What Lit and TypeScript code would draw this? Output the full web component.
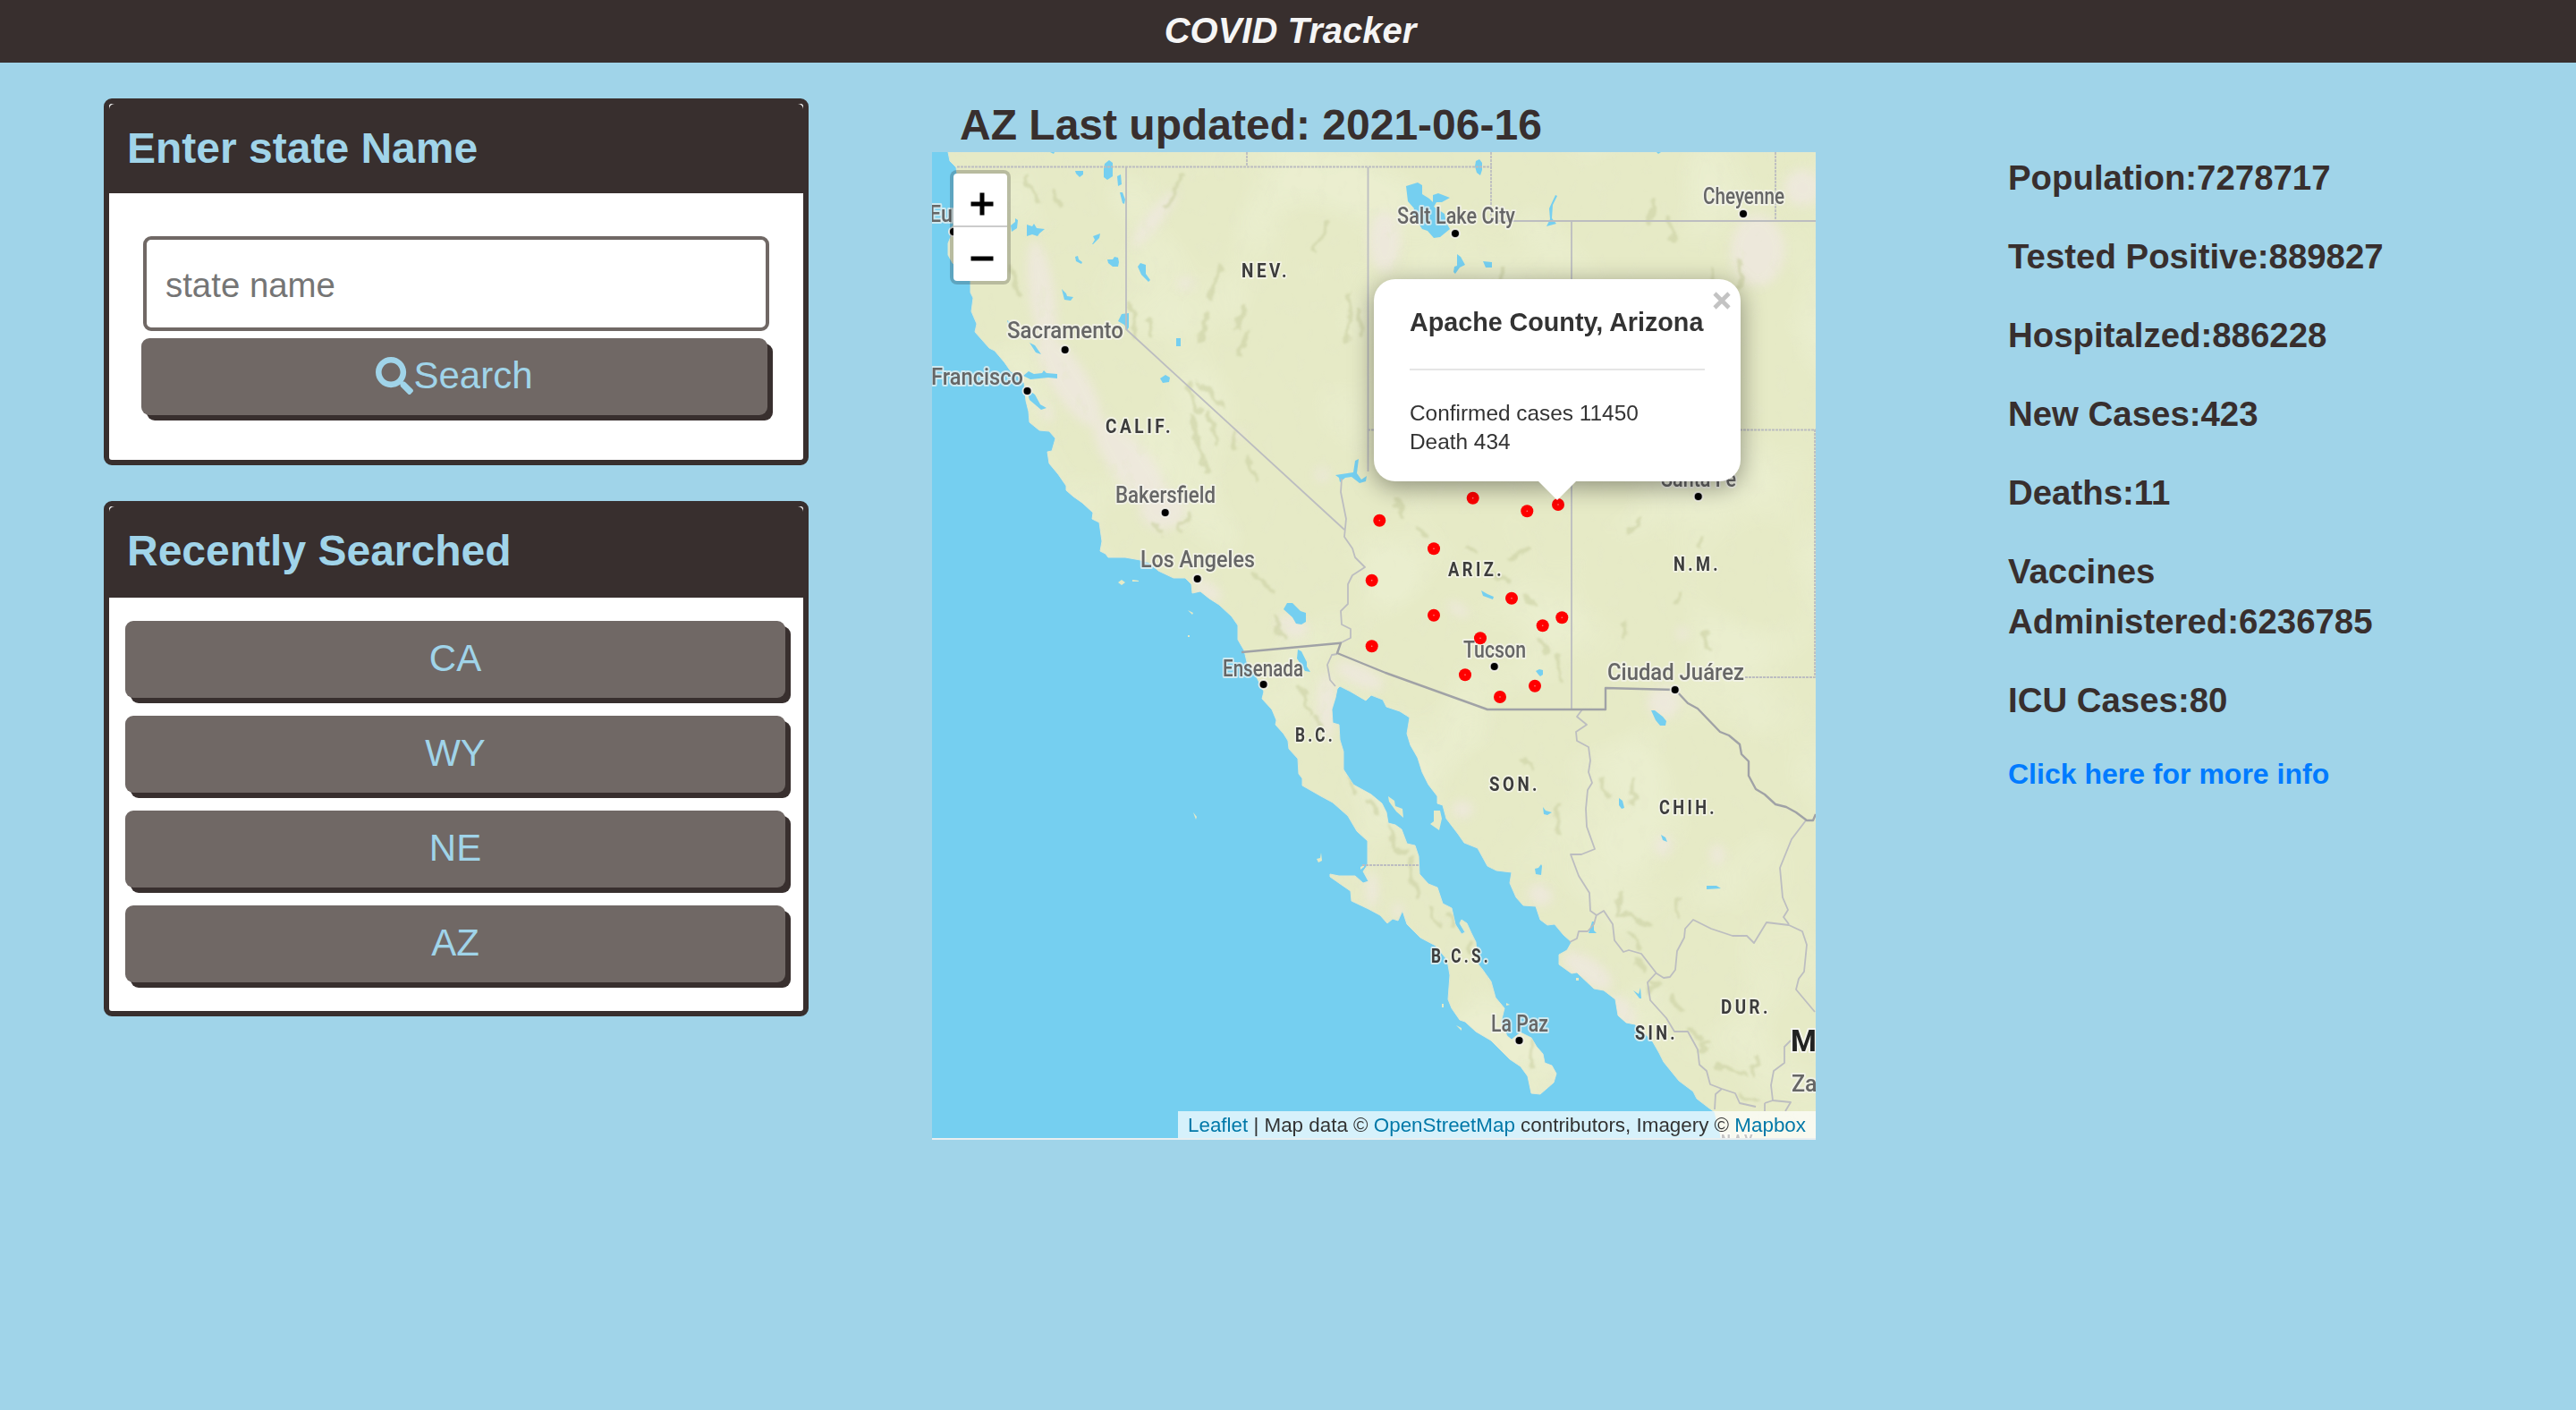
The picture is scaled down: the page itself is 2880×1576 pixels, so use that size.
import { LitElement, html, css, svg } from "lit";
import { customElement, property } from "lit/decorators.js";

const FONT = css`"Liberation Sans", Arial, sans-serif`;

@customElement("info-card")
class InfoCard extends LitElement {
  @property() heading = "";
  static styles = css`
    :host { display: block; box-sizing: border-box; border: 6px solid #382f2e; border-radius: 9px; background: #fff; }
    .head { box-sizing: border-box; height: var(--head-height, 100px); padding: 21px 0 0 20px; background: #382f2e; border-radius: 6px 6px 0 0; }
    h2 { margin: 0; font: bold 48px/58px ${FONT}; color: #a0d4e9; white-space: nowrap; }
  `;
  render() {
    return html`<div class="head"><h2>${this.heading}</h2></div><slot></slot>`;
  }
}

interface Label { t: string; x: number; y: number; w?: number; }

const CITIES: Label[] = [
  { t: "Eur", x: 1039, y: 248, w: 34 },
  { t: "Sacramento", x: 1126, y: 378, w: 130 },
  { t: "Francisco", x: 1041, y: 430, w: 103 },
  { t: "Bakersfield", x: 1247, y: 562, w: 112 },
  { t: "Los Angeles", x: 1275, y: 634, w: 128 },
  { t: "Ensenada", x: 1367, y: 755.5, w: 90 },
  { t: "Salt Lake City", x: 1562, y: 250, w: 132 },
  { t: "Cheyenne", x: 1904, y: 228, w: 91 },
  { t: "Santa Fe", x: 1857, y: 544, w: 84 },
  { t: "Tucson", x: 1636, y: 735, w: 70 },
  { t: "Ciudad Juárez", x: 1797, y: 760, w: 153 },
  { t: "La Paz", x: 1667, y: 1152.5, w: 64 },
  { t: "Zac", x: 2003, y: 1220 },
];

const STATES: Label[] = [
  { t: "NEV.", x: 1388, y: 309.5, w: 54 },
  { t: "CALIF.", x: 1236, y: 484, w: 76 },
  { t: "ARIZ.", x: 1619, y: 643.5, w: 63 },
  { t: "N.M.", x: 1871, y: 638, w: 53 },
  { t: "B.C.", x: 1448, y: 829, w: 45 },
  { t: "SON.", x: 1665, y: 883.5, w: 57 },
  { t: "CHIH.", x: 1855, y: 909.5, w: 65 },
  { t: "B.C.S.", x: 1600, y: 1076, w: 67 },
  { t: "SIN.", x: 1828, y: 1161.5, w: 48 },
  { t: "DUR.", x: 1924, y: 1132.5, w: 56 },
  { t: "NAY.", x: 1924, y: 1284, w: 44 },
];

const DOTS = [
  [1066, 259], [1190.7, 391], [1148.5, 437], [1302.7, 573], [1338.7, 647], [1412.6, 765],
  [1627, 261], [1949, 239], [1898.7, 555], [1670.7, 745], [1872.7, 771], [1698.5, 1163],
];

const CASES = [
  [1646.7, 556.7], [1707.3, 571.3], [1742, 564], [1542.3, 581.7], [1603, 613.3],
  [1533.7, 648.7], [1690, 668.7], [1603, 687.7], [1746.3, 690.3], [1724.7, 699.3],
  [1655, 713.3], [1533.7, 722.3], [1638, 754.3], [1677, 779], [1716, 766.7],
];

const LAND =
  "M1060 170 1062 180 1069 187 1072 210 1068 240 1064 262 1060 272 1060 285 1065 294 1076 303 1085 314 1085 327 1088 333 1086 348 1092 362 1090 371 1106 389 1112 392 1123 405 1130 415 1138 420 1145 428 1147 448 1150 460 1151 472 1162 481 1173 482 1180 490 1176 504 1171 505 1173 518 1183 530 1192 543 1192 548 1200 555 1210 562 1222 573 1221 580 1229 584 1232 605 1230 616 1236 619 1239 623 1258 623 1275 626 1285 629 1295 638 1312 646 1325 646 1332 653 1333 663 1342 661 1352 669 1363 676 1377 689 1384 699 1384 715 1391 727 1394 740 1405 757 1413 773 1411 781 1422 793 1427 805 1426 810 1435 820 1440 828 1441 837 1451 848 1452 865 1456 870 1456 878 1477 890 1490 897 1507 912 1517 929 1529 940 1529 967 1524 974 1530 985 1524 987 1515 979 1497 979 1487 977 1487 980 1497 987 1510 996 1511 1007 1530 1016 1543 1023 1551 1032 1557 1027 1563 1029 1568 1018 1573 1033 1588 1048 1605 1057 1618 1073 1621 1090 1619 1117 1623 1127 1632 1140 1638 1142 1650 1153 1667 1163 1688 1184 1700 1192 1708 1203 1712 1222 1722 1223 1737 1210 1740 1200 1735 1191 1727 1188 1725 1178 1718 1170 1712 1160 1700 1154 1690 1162 1685 1158 1678 1143 1682 1127 1672 1115 1667 1097 1657 1083 1652 1077 1650 1053 1645 1043 1640 1032 1634 1028 1632 1032 1638 1042 1634 1044 1627 1033 1623 1015 1613 1010 1607 992 1597 988 1587 977 1586 957 1582 945 1573 943 1567 927 1560 922 1552 920 1550 908 1545 898 1533 888 1513 877 1502 860 1502 840 1498 827 1497 810 1490 808 1489 793 1493 780 1495 770 1498 767 1510 773 1527 783 1533 777 1546 782 1550 790 1565 795 1576 802 1573 820 1577 833 1585 847 1590 863 1597 877 1607 890 1607 898 1613 900 1617 915 1630 932 1637 942 1652 948 1663 968 1673 973 1690 975 1688 987 1695 1003 1703 1012 1717 1013 1722 1028 1730 1034 1738 1033 1748 1045 1757 1053 1752 1062 1743 1067 1743 1078 1757 1088 1763 1087 1782 1105 1793 1107 1806 1117 1809 1135 1818 1143 1828 1145 1847 1163 1855 1177 1860 1187 1877 1208 1893 1220 1897 1228 1910 1238 1917 1243 1925 1274 2030 1274 2030 170Z";

const ISLANDS =
  "M1250 651 1254 648 1258 651 1254 654ZM1266 648 1273 649 1273 650 1266 650ZM1328 682 1334 685 1333 687ZM1328 710h2v2h-2ZM1334 908 1338 913 1337 916ZM1477 953 1478 962 1474 964 1472 960 1476 959ZM1552 890 1559 895 1560 901 1568 904 1569 914 1561 907 1553 896ZM1603 906 1610 906 1612 915 1609 928 1599 921 1603 918ZM1612 1122h2v4h-2ZM1628 1146 1634 1149 1634 1152ZM1684 1121 1688 1123 1684 1124ZM1762 1093h3v3h-3ZM1521 969l4-2v2l-4 3Z";

const LAKES =
  "M1235 183l5-4 4 3 0 15-6 4-4-3 0-9ZM1202 191l9 0 0 4-4 3-4-4ZM1249 197l4-2 1 11-4 2ZM1252 215l3 0 3 8-1 5-2-1ZM1130 252l5-4 0-4 3 2-1 9-6 4ZM1148 251l6 2 2-3 3 5 9 1-6 5-2 3-6-2-6 2ZM1222 264l8-3-1 5-7 7-1 0 3-5ZM1202 287l3-1 1 4 4 3-1 2-6-3ZM1238 290l6 0 2-3 4 1 1 5-1 5-6 0-5-4ZM1272 298l3-4 6 2 0 10 5 7-2 2-8-8ZM1187 323l5 5 1 3 7 1-3 4-7-1ZM1254 351l8-1 0 16-2 3-3-6-7-4ZM1315 378l5 0 0 9-5 0ZM1297 423l6-4 5 3-1 5-7 1ZM1151 383l6 3 7 10-6-2ZM1144 420l6-5 6 3 9-1 2-3 3 3 12 1 0 5-10-1-20 2ZM1147 434l10 7 6 11 7 4-6 2-13-11ZM1126 358l5 3-4 1ZM1435 681l4-7 6 0 9 9 6 2 0 10-5 3-6-1-4-7ZM1451 726l4 2 6 12 0 5 4 6-6-1-9-14ZM1493 531l20-3 2-13 4-2-2 16 5 7 6-4-1 6-7 2-9-7-7 1-6 5-1-5ZM1572 208l13-4 5 3 0 10 8 5 4 4 0-8 6-2 13 5-9 5-6 0-3 5 12 8 2 10 4 7-11 9-7 1-7-8-6-2-11-17 2-6-7-8ZM1650 180l4-2 3 4 0 8-2 6-4-3-2-7ZM1629 284l4 3 5 9-6 3-5 7-2-2 1-6 3-1ZM1658 292l10 1 0 6-7 0ZM1739 218l2 1-5 10-1 15 5 6-11 3 4-8-1-12ZM1656 660l7 4 7 3-1 3-11-4ZM1717 750l4-2 4 1 0 5-3 2-2-2ZM1846 794l4 0 9 7 4 5-1 5-6 0-5-6ZM1810 892l4 3 2 8-3 1-3-4ZM1857 933l5 3 2 5-5-2ZM1725 902l3 4 7 2-5 3-4-1ZM1716 971l4-1 3-4 1 2-1 10-6-1ZM1908 990l11 0 5 3-16 1ZM1777 1040l3-10 2 0 0 10 3 3-9 0ZM1826 1107l6 4 2-7 1 12-2 0ZM1174 170h5l-1 2ZM1852 170h5l-3 2Z";

const STATE_LINES =
  "M1259 187V368L1503 592M1529.5 187V527M1757 247V793M1667 247H2030M1500 535l-1 15 6 30-2 20 9 13 3 10 11 11-14 9-5 10v22l-8 8 1 15 10 5v10l-12 6";

const DASHED_LINES =
  "M1070 186.500H1668M1394 170V186M1667 170V247M1985 170V247M1529 480.500H2030M2029 480V757H1950M1523 967H1587";

const MEXICO_LINES =
  "M1495 731l-6 1-5 11 3 17 6 7M1769 793l-6 8 11 9-12 8 1 10 13 7 2 15-2 13 4 12-5 8-2 21 1 20 9 25-15 6h-12l9 24 12 19 1 20 7 5 8-5 10 15 2 18 10 13 6-2 14 4 17 22 8 5 7-1 6-8 2-21 8-15 1-10 9-10 20 10 24 8 16 0 8 8 14-23 25 3 15 7 5 15-3 30-6 8-3 12 21 25M1785 1022l-3 11-7 8h-10l-2 8-8 4M2019 917l-16 21-13 32 3 33 6 14-5 8 6 8M1852 1087l-10 11 3 20 18 20 9 15 15 0 11 20 2 17 8 7 4 15 13 5 15 5 5 11 18 4M1925 1217l-7 6-1 17M2002 1163l-7 7v18l-12 9-3 16 2 17-9 3M1982 1230l20 2-6 10M1973 1233v9";

const NATION_LINES =
  "M1388 729 1499 718.700 1495 730 1549 752 1663 793H1795V769L1873 771 1887 786 1898 792 1923 818 1933 822 1945 832 1947 843 1955 851 1955 867 1963 882 1973 888 1985 899 1997 902 2008 908 2020 917 2027 917 2030 910";

/* soft arid zones: cx, cy, rx, ry, rotation */
const ARID = [
  [1165, 330, 14, 62, -8], [1195, 425, 20, 60, -32], [1265, 520, 22, 62, -38], [1300, 570, 26, 22, 0],
  [1548, 270, 18, 34, 0], [1290, 245, 8, 40, 38], [1326, 317, 10, 7, 0], [1478, 530, 8, 8, 0],
  [1350, 660, 18, 9, 35], [1445, 700, 18, 12, 20], [1520, 755, 30, 11, 25], [1483, 790, 10, 38, 0],
  [1534, 995, 7, 20, 0], [1563, 1018, 6, 9, 0], [1630, 681, 14, 6, 30], [1881, 708, 6, 8, 0],
  [1722, 1000, 14, 12, 30], [1775, 1085, 32, 14, 35], [1815, 1130, 10, 20, -35], [1860, 785, 18, 18, 0],
  [1965, 280, 30, 40, 0], [2015, 210, 20, 20, 0], [1635, 905, 12, 10, 0], [1385, 485, 6, 5, 0],
  [1170, 460, 6, 12, -30], [1860, 945, 10, 12, 0], [1920, 955, 8, 12, 0],
];

/* ridges drawn as soft darker strokes */
const RIDGES =
  "M1160 225l-12-25M1178 215l8 14M1130 300l10 30M1322 200l-18 30M1350 350l-8 28M1365 300l-12 34M1483 250l-14 30M1390 345l-6 22M1395 370l-8 26M1508 330v50M1520 345v30M1265 340l4 38M1284 355l3 22M1330 430l12 30M1334 465l6 40 8 22M1352 465l10 30M1395 510l8 26M1340 430l28 24M1378 480v20M1290 585l10 12M1320 590l10-16M1400 640l24 22M1425 690l10 22M1455 770l10 26M1470 800l8 18M1507 868l8 18M1530 895l10 14M1555 925l4 22 12 6M1580 960v30l6 8M1600 1015l10 18M1620 1022l4 14M1643 1055v10M1712 1165v30M1868 245l4 24M1915 300v30M1850 220l-8 26M1560 560l10 18M1585 590l8 10M1640 610l12 10M1720 715l8 14M1740 735l6 24M1835 580l-6 12-10 3M1905 600l-6 10M1880 660l-5 14M1815 695v18M1905 705l8 20M1790 870l8 20M1825 870v30M1742 900v30M1810 1020v-18l4-8M1822 1045l10 10M1830 1070l8 14M1815 1020l30 14M1845 1095l10 5-12 8M1870 1115l10 14M1890 1150l14 16M1900 1175l12-6M1920 1190l30 10M1960 1200l5-20M1875 1005v18M1945 1225l20 8M1710 610l-20 14M1615 330l20-8M1680 300l-8 20M1555 450v30M1945 290l2 30M1665 640l20 10M1705 665l10 10M1700 850l12 6";

@customElement("region-map")
class RegionMap extends LitElement {
  static styles = css`
    :host { display: block; position: relative; overflow: hidden; height: 1104px; background: #e9eef0; font-family: ${FONT}; }
    .canvas { display: block; width: 988px; height: 1102px; }
    .city { font: 500 25px Roboto, sans-serif; fill: #666; stroke: rgba(244, 244, 240, 0.7); stroke-width: 4px; paint-order: stroke; stroke-linejoin: round; }
    .state { font: bold 21.500px Roboto, sans-serif; letter-spacing: 4px; fill: #3c3c3c; stroke: rgba(244, 244, 236, 0.75); stroke-width: 4px; paint-order: stroke; stroke-linejoin: round; }
    .country { font: bold 33px Roboto, sans-serif; fill: #222; stroke: #f4f4ec; stroke-width: 4px; paint-order: stroke; }
    .zoom { position: absolute; left: 20px; top: 20px; width: 60px; border: 4px solid rgba(0, 0, 0, 0.2); border-radius: 8px; background: #fff; background-clip: padding-box; }
    .zoom div { display: flex; align-items: center; justify-content: center; height: 60px; padding: 9px 0 0 4px; box-sizing: border-box; }
    .zoom div:first-child { border-bottom: 2px solid #ccc; }
    .zoom svg { display: block; }
    .popup { position: absolute; left: 494px; top: 142px; width: 410px; height: 226px; box-sizing: border-box; padding: 32px 40px 0; border-radius: 24px; background: #fff; color: #333; box-shadow: 0 6px 28px rgba(0, 0, 0, 0.4); }
    .popup h3 { margin: 0; font: bold 28.700px/32px ${FONT}; white-space: nowrap; }
    .popup hr { margin: 36px 0 32px; border: 0; border-top: 2px solid #e5e5e5; }
    .popup p { margin: 0; font-size: 24.400px; line-height: 32px; white-space: nowrap; }
    .tip { position: absolute; left: 184px; top: 226px; width: 42px; height: 21px; background: #fff; clip-path: polygon(0 0, 100% 0, 50% 100%); }
    .close { position: absolute; left: 379px; top: 14px; display: block; }
    .credit { position: absolute; right: 0; bottom: 2px; height: 30px; padding: 0 11px; background: rgba(255, 255, 255, 0.7); color: #333; font-size: 22.400px; line-height: 32px; white-space: nowrap; }
    .credit a { color: #0078a8; text-decoration: none; }
  `;

  label(l: Label, cls: string) {
    return l.w
      ? svg`<text class=${cls} x=${l.x} y=${l.y} textLength=${l.w} lengthAdjust="spacingAndGlyphs">${l.t}</text>`
      : svg`<text class=${cls} x=${l.x} y=${l.y}>${l.t}</text>`;
  }

  render() {
    return html`
      <svg class="canvas" viewBox="1042 170 988 1102">
        <defs>
          <clipPath id="land"><path d=${LAND}></path></clipPath>
          <filter id="soft" x="-50%" y="-50%" width="200%" height="200%"><feGaussianBlur stdDeviation="6"></feGaussianBlur></filter>
          <filter id="ridge" x="-5%" y="-5%" width="110%" height="110%">
            <feTurbulence type="fractalNoise" baseFrequency="0.07" numOctaves="2" seed="3" result="n"></feTurbulence>
            <feDisplacementMap in="SourceGraphic" in2="n" scale="16" xChannelSelector="R" yChannelSelector="G"></feDisplacementMap>
            <feGaussianBlur stdDeviation="1.3"></feGaussianBlur>
          </filter>
          <filter id="relief" x="0" y="0" width="100%" height="100%">
            <feTurbulence type="fractalNoise" baseFrequency="0.07 0.045" numOctaves="3" seed="11"></feTurbulence>
            <feColorMatrix values="0 0 0 0 0.79  0 0 0 0 0.81  0 0 0 0 0.6  6 0 0 0 -3.6"></feColorMatrix>
          </filter>
          <filter id="meadow" x="0" y="0" width="100%" height="100%">
            <feTurbulence type="fractalNoise" baseFrequency="0.008" numOctaves="2" seed="4"></feTurbulence>
            <feColorMatrix values="0 0 0 0 0.885  0 0 0 0 0.92  0 0 0 0 0.735  0 4 0 0 -1.9"></feColorMatrix>
          </filter>
        </defs>
        <rect x="1042" y="170" width="988" height="1102" fill="#75cff0"></rect>
        <path d=${LAND} fill="#e6eac6" stroke="#dfe8d2" stroke-width="1"></path>
        <path d=${ISLANDS} fill="#e6eac6"></path>
        <g clip-path="url(#land)">
          <rect x="1042" y="170" width="988" height="1102" color-interpolation-filters="sRGB" filter="url(#meadow)" opacity="0.35"></rect>
          <g filter="url(#soft)" fill="#efe8e0" opacity="0.8">
            ${ARID.map((a) => svg`<ellipse cx=${a[0]} cy=${a[1]} rx=${a[2]} ry=${a[3]} transform="rotate(${a[4]} ${a[0]} ${a[1]})"></ellipse>`)}
          </g>
          <rect x="1042" y="170" width="988" height="1102" filter="url(#relief)" opacity="0.32"></rect>
          <path d=${RIDGES} fill="none" stroke="#cbd0a3" stroke-width="5" stroke-linecap="round" filter="url(#ridge)" opacity="0.6"></path>
        </g>
        <path d=${LAKES} fill="#75cff0"></path>
        <g fill="none" stroke="#bcbdc0" stroke-width="1.800" stroke-linejoin="round">
          <path d=${STATE_LINES}></path>
          <path d=${DASHED_LINES} stroke-dasharray="3 1"></path>
          <path d=${MEXICO_LINES}></path>
          <path d=${NATION_LINES} stroke="#a0a2a6" stroke-width="2.400"></path>
        </g>
        ${DOTS.map((d) => svg`<circle cx=${d[0]} cy=${d[1]} r="5" fill="#000" stroke="#f6f4ee" stroke-opacity="0.85" stroke-width="2"></circle>`)}
        ${CITIES.map((l) => this.label(l, "city"))}
        ${STATES.map((l) => this.label(l, "state"))}
        <text class="country" x="2002" y="1175">M</text>
        ${CASES.map((c) => svg`<circle cx=${c[0]} cy=${c[1]} r="7" fill="#f00"></circle><circle cx=${c[0]} cy=${c[1]} r="0.8" fill="#ff8a8a"></circle>`)}
      </svg>
      <div class="zoom">
        <div><svg width="26" height="26" viewBox="0 0 26 26"><path d="M13 0.500V25.500M0.500 13H25.500" stroke="#000" stroke-width="5"></path></svg></div>
        <div><svg width="26" height="26" viewBox="0 0 26 26"><path d="M0.500 13H25.500" stroke="#000" stroke-width="5"></path></svg></div>
      </div>
      <div class="popup">
        <h3>Apache County, Arizona</h3>
        <hr />
        <p>Confirmed cases 11450<br />Death 434</p>
        <div class="tip"></div>
        <svg class="close" width="20" height="20" viewBox="0 0 20 20"><path d="M2 2 18 18M18 2 2 18" stroke="#c3c3c3" stroke-width="4.600"></path></svg>
      </div>
      <div class="credit"><a>Leaflet</a> | Map data © <a>OpenStreetMap</a> contributors, Imagery © <a>Mapbox</a></div>
    `;
  }
}

@customElement("app-root")
class AppRoot extends LitElement {
  static styles = css`
    :host { display: block; min-height: 1576px; background: #a0d4e9; color: #382f2e; font-family: ${FONT}; }
    header { height: 70px; padding-left: 5px; background: #382f2e; color: #f5f5f5; text-align: center; font: italic bold 40px/68px ${FONT}; }
    main { display: flex; align-items: flex-start; }
    .side { display: flex; flex-direction: column; gap: 40px; width: 788px; padding: 40px 0 0 116px; }
    .search { height: 410px; }
    .recent { height: 576px; --head-height: 102px; }
    .form { display: flex; flex-direction: column; padding: 48px 38px 0 36px; }
    input { box-sizing: border-box; height: 106px; margin: 0 0 8px 2px; padding: 3px 20px 0 21px; border: 4px solid #706865; border-radius: 9px; background: #fff; font: 38.400px ${FONT}; }
    input::placeholder { color: #757575; opacity: 1; }
    .btn { display: flex; align-items: center; justify-content: center; box-sizing: border-box; height: 86px; padding-bottom: 3px; border-radius: 9px; background: #706865; box-shadow: 6px 6px 0 #382f2e; color: #a0d4e9; font-size: 42px; line-height: 48px; }
    .form .btn { margin-right: 2px; }
    .glass { width: 42px; height: 42px; }
    .list { display: flex; flex-direction: column; gap: 20px; padding: 26px 20px 0 18px; }
    .center { width: 988px; margin-left: 138px; padding-top: 40px; }
    h1 { margin: 0; padding-left: 31px; height: 60px; font: bold 48px/59px ${FONT}; white-space: nowrap; }
    .stats { width: 440px; margin-left: 215px; padding-top: 101px; }
    .stats p { margin: 0 0 32px; font: bold 38.400px/56px ${FONT}; }
    .stats a { display: block; color: #007bff; font: bold 32px/44px ${FONT}; }
  `;
  render() {
    const stats = [
      "Population:7278717", "Tested Positive:889827", "Hospitalzed:886228", "New Cases:423",
      "Deaths:11", "Vaccines Administered:6236785", "ICU Cases:80",
    ];
    return html`
      <header>COVID Tracker</header>
      <main>
        <div class="side">
          <info-card class="search" heading="Enter state Name">
            <div class="form">
              <input placeholder="state name" />
              <div class="btn">
                <svg class="glass" viewBox="0 0 512 512"><path fill="#a0d4e9" d="M505 442.700L405.300 343c-4.500-4.500-10.600-7-17-7H372c27.600-35.300 44-79.700 44-128C416 93.100 322.900 0 208 0S0 93.100 0 208s93.100 208 208 208c48.300 0 92.700-16.400 128-44v16.300c0 6.400 2.500 12.500 7 17l99.700 99.700c9.400 9.400 24.600 9.400 33.900 0l28.300-28.300c9.400-9.400 9.400-24.600.1-34zM208 336c-70.700 0-128-57.200-128-128 0-70.700 57.200-128 128-128 70.700 0 128 57.200 128 128 0 70.700-57.200 128-128 128z"></path></svg>
                <span>Search</span>
              </div>
            </div>
          </info-card>
          <info-card class="recent" heading="Recently Searched">
            <div class="list">${["CA", "WY", "NE", "AZ"].map((s) => html`<div class="btn">${s}</div>`)}</div>
          </info-card>
        </div>
        <div class="center">
          <h1>AZ Last updated: 2021-06-16</h1>
          <region-map></region-map>
        </div>
        <div class="stats">
          ${stats.map((s) => html`<p>${s}</p>`)}
          <a>Click here for more info</a>
        </div>
      </main>
    `;
  }
}
